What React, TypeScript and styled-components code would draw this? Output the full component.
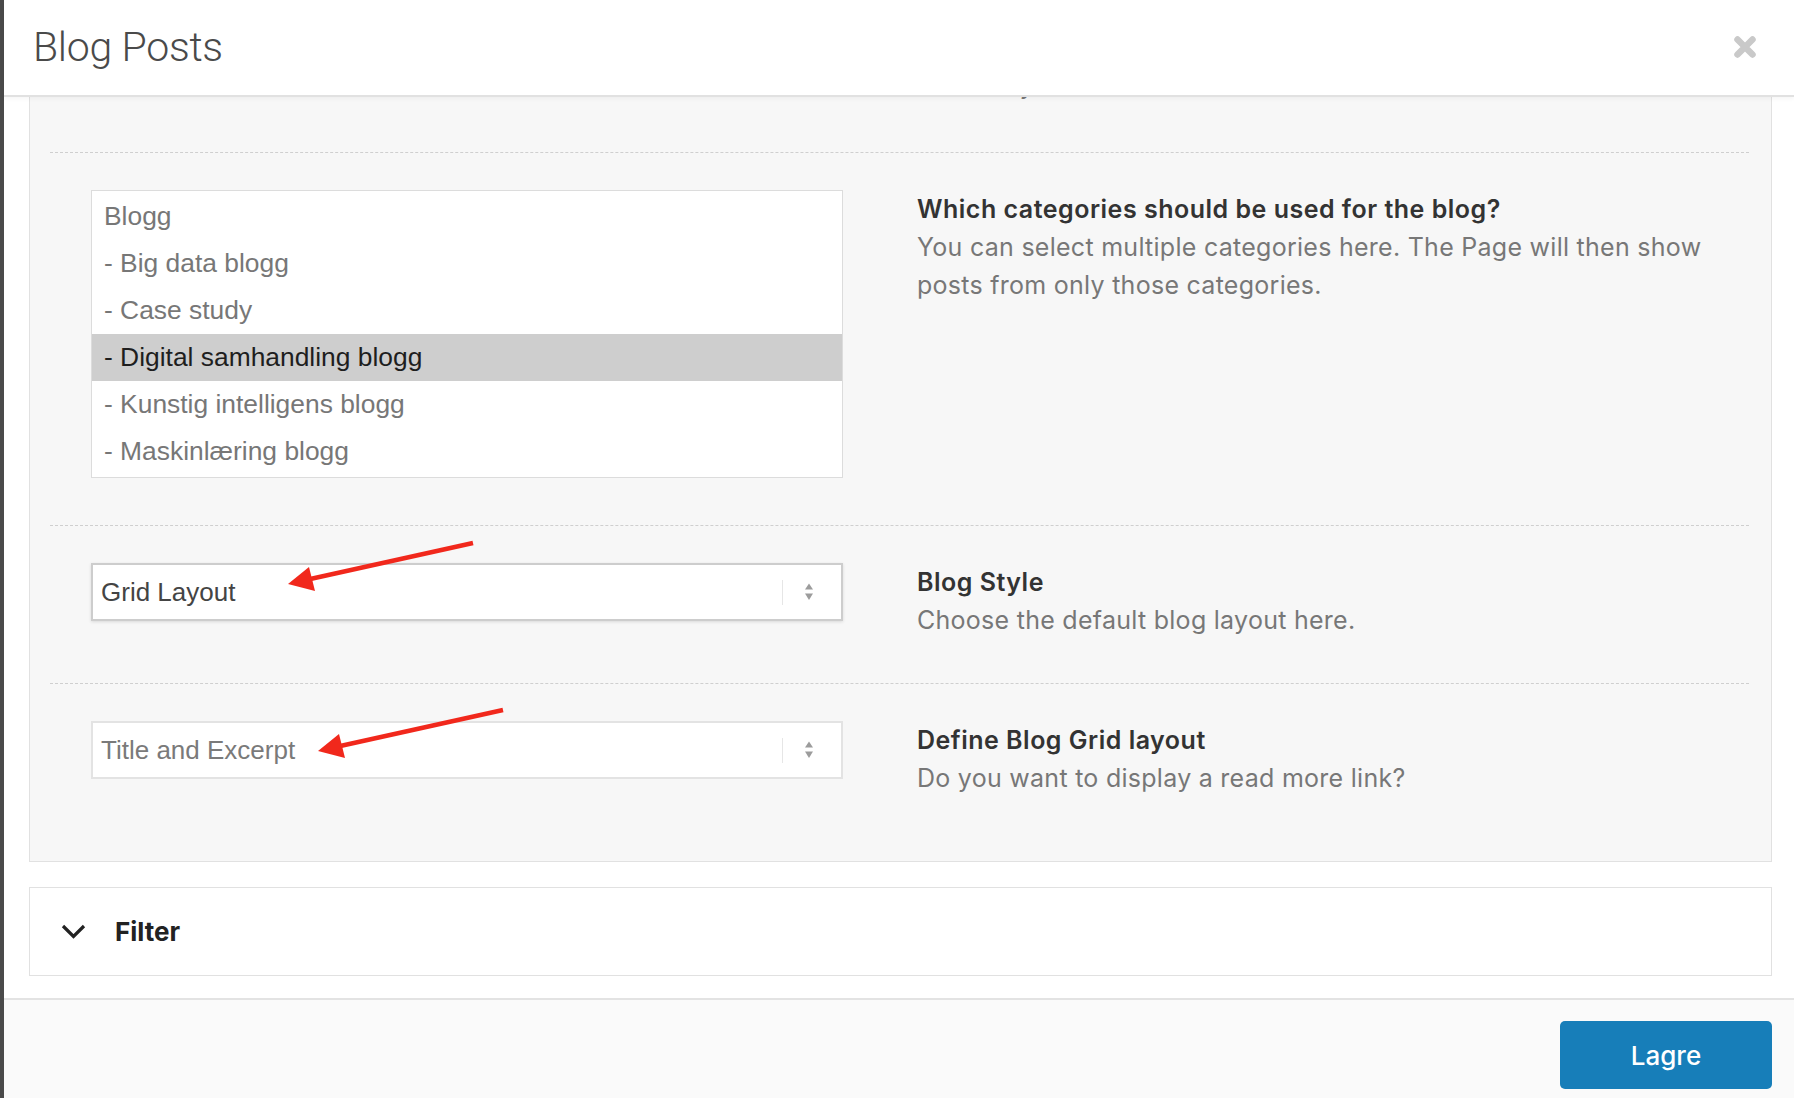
import { useLayoutEffect, useRef } from 'react';
import styled, { createGlobalStyle } from 'styled-components';

const GlobalStyle = createGlobalStyle`
  html, body {
    margin: 0;
    height: 100%;
    overflow: hidden;
    background: #4a4a4a;
  }
  #root {
    height: 100%;
  }
  * {
    box-sizing: border-box;
  }
`;

const categories = [
  'Blogg',
  '- Big data blogg',
  '- Case study',
  '- Digital samhandling blogg',
  '- Kunstig intelligens blogg',
  '- Maskinlæring blogg',
];

function SelectArrows() {
  return (
    <svg width='10' height='18' viewBox='0 0 10 18'>
      <path d='M1 6.5 L5 0.5 L9 6.5 Z' fill='#9c9c9c' />
      <path d='M1 10.5 L5 17 L9 10.5 Z' fill='#9c9c9c' />
    </svg>
  );
}

interface ArrowProps {
  x: number;
  y: number;
}

// red annotation arrow, tail at (x, y), pointing down-left to the label
function RedArrow({ x, y }: ArrowProps) {
  const tipX = x - 185;
  const tipY = y + 41;
  return (
    <StArrow>
      <line x1={x} y1={y} x2={tipX + 20} y2={tipY - 4.5} stroke='#f1281c' strokeWidth='4.5' />
      <polygon points={`${tipX},${tipY} ${tipX + 21},${tipY - 17} ${tipX + 27},${tipY + 7}`} fill='#f1281c' />
    </StArrow>
  );
}

function App() {
  const bodyRef = useRef<HTMLDivElement>(null);

  // the modal body is scrolled all the way down
  useLayoutEffect(() => {
    if (bodyRef.current) bodyRef.current.scrollTop = bodyRef.current.scrollHeight;
  }, []);

  return (
    <>
      <GlobalStyle />
      <StModal>
        <StHeader>
          <StTitle>Blog Posts</StTitle>
          <StClose aria-label='close'>
            <svg width='24' height='24' viewBox='0 0 24 24'>
              <path d='M4.5 4.5 L19.5 19.5 M19.5 4.5 L4.5 19.5' stroke='#c9c9c9' strokeWidth='6.5' strokeLinecap='round' />
            </svg>
          </StClose>
        </StHeader>

        <StBody ref={bodyRef}>
          <StPanel>
            <StRow $bottom={48}>
              <div />
              <StInfo>
                <StDesc>Sorted by date.</StDesc>
              </StInfo>
            </StRow>

            <StRow>
              <StList>
                {categories.map((c) => (
                  <StOption key={c} $selected={c === '- Digital samhandling blogg'}>{c}</StOption>
                ))}
              </StList>
              <StInfo>
                <StHeading>Which categories should be used for the blog?</StHeading>
                <StDesc>You can select multiple categories here. The Page will then show posts from only those categories.</StDesc>
              </StInfo>
            </StRow>

            <StRow>
              <StSelectWrap>
                <StSelect $raised>
                  <StSelectText>Grid Layout</StSelectText>
                  <StSelectSide>
                    <SelectArrows />
                  </StSelectSide>
                </StSelect>
                <RedArrow x={382} y={-20} />
              </StSelectWrap>
              <StInfo>
                <StHeading>Blog Style</StHeading>
                <StDesc>Choose the default blog layout here.</StDesc>
              </StInfo>
            </StRow>

            <StRow>
              <StSelectWrap>
                <StSelect>
                  <StSelectText $muted>Title and Excerpt</StSelectText>
                  <StSelectSide>
                    <SelectArrows />
                  </StSelectSide>
                </StSelect>
                <RedArrow x={412} y={-11} />
              </StSelectWrap>
              <StInfo>
                <StHeading>Define Blog Grid layout</StHeading>
                <StDesc>Do you want to display a read more link?</StDesc>
              </StInfo>
            </StRow>
          </StPanel>

          <StFilter>
            <svg width='25' height='15' viewBox='0 0 25 15'>
              <path d='M2 2 L12.5 12.5 L23 2' fill='none' stroke='#222' strokeWidth='3.2' />
            </svg>
            <StFilterLabel>Filter</StFilterLabel>
          </StFilter>
        </StBody>

        <StFooter>
          <StSaveButton type='button'>Lagre</StSaveButton>
        </StFooter>
      </StModal>
    </>
  );
}

export default App;

const StModal = styled.div`
  margin-left: 4px;
  height: 100%;
  background: #fff;
  display: flex;
  flex-direction: column;
`;

const StHeader = styled.header`
  flex: 0 0 97px;
  display: flex;
  align-items: center;
  justify-content: space-between;
  padding: 0 37px 2px 29px;
  border-bottom: 2px solid #e1e1e1;
  box-shadow: 0 2px 4px rgba(0, 0, 0, 0.04);
  position: relative;
  z-index: 1;
`;

const StTitle = styled.h1`
  margin: 0;
  font-family: Roboto, 'Liberation Sans', sans-serif;
  font-weight: 300;
  font-size: 41px;
  color: #4a4a4a;
  letter-spacing: -0.3px;
`;

const StClose = styled.button`
  border: none;
  background: transparent;
  padding: 0;
  width: 24px;
  height: 24px;
  display: flex;
  cursor: pointer;
`;

const StBody = styled.div`
  flex: 1;
  min-height: 0;
  overflow-y: auto;
  padding: 0 22px 22px 25px;
  scrollbar-width: none;
  &::-webkit-scrollbar {
    display: none;
  }
`;

const StPanel = styled.section`
  background: #f7f7f7;
  border: 1px solid #e1e1e1;
  padding: 0 22px 20px 20px;
`;

const StRow = styled.div<{ $bottom?: number }>`
  display: grid;
  grid-template-columns: 752px 1fr;
  column-gap: 74px;
  align-items: start;
  padding: 37px 0 ${(p) => p.$bottom ?? 44}px 41px;
  border-top: 1px dashed #cfcfcf;
  &:first-child {
    border-top-color: transparent;
  }
`;

const StList = styled.div`
  background: #fff;
  border: 1px solid #dcdcdc;
  padding: 2px 0;
  margin-bottom: 3px;
  font-family: 'Liberation Sans', Arial, sans-serif;
  font-size: 26.4px;
`;

const StOption = styled.div<{ $selected?: boolean }>`
  height: 47px;
  line-height: 47px;
  padding-left: 12px;
  color: ${(p) => (p.$selected ? '#1e1e1e' : '#777')};
  background: ${(p) => (p.$selected ? '#cecece' : 'transparent')};
  white-space: nowrap;
`;

const StSelectWrap = styled.div`
  position: relative;
`;

const StSelect = styled.div<{ $raised?: boolean }>`
  height: 58px;
  display: flex;
  align-items: center;
  background: #fff;
  border: ${(p) => (p.$raised ? '2px solid #cdcdcd' : '2px solid #e3e3e3')};
  box-shadow: ${(p) => (p.$raised ? '0 1px 3px rgba(0, 0, 0, 0.12)' : 'none')};
  padding-left: 8px;
`;

const StSelectText = styled.span<{ $muted?: boolean }>`
  flex: 1;
  font-family: 'Liberation Sans', Arial, sans-serif;
  font-size: 26px;
  color: ${(p) => (p.$muted ? '#7a7a7a' : '#444')};
`;

const StSelectSide = styled.div`
  width: 59px;
  height: 25px;
  border-left: 1px solid #e6e6e6;
  display: flex;
  align-items: center;
  padding-left: 21px;
`;

const StArrow = styled.svg`
  position: absolute;
  left: 0;
  top: 0;
  width: 100%;
  height: 100%;
  overflow: visible;
  pointer-events: none;
`;

const StInfo = styled.div`
  font-family: Inter, 'Noto Sans', sans-serif;
  font-size: 25px;
`;

const StHeading = styled.div`
  font-weight: 600;
  color: #333;
  padding-top: 2px;
  line-height: 34px;
  letter-spacing: 0.5px;
`;

const StDesc = styled.div`
  margin-top: 2px;
  color: #777;
  line-height: 38px;
  letter-spacing: 0.27px;
`;

const StFilter = styled.div`
  margin-top: 25px;
  height: 89px;
  display: flex;
  align-items: center;
  gap: 29px;
  padding-left: 31px;
  background: #fff;
  border: 1px solid #e1e1e1;
`;

const StFilterLabel = styled.span`
  font-family: Inter, 'Noto Sans', sans-serif;
  font-weight: 700;
  font-size: 26px;
  color: #222;
`;

const StFooter = styled.footer`
  flex: 0 0 100px;
  display: flex;
  justify-content: flex-end;
  align-items: flex-start;
  padding: 21px 22px 0 0;
  background: #fafafa;
  border-top: 2px solid #e3e3e3;
`;

const StSaveButton = styled.button`
  width: 212px;
  height: 68px;
  border: none;
  border-radius: 5px;
  background: #177eb9;
  color: #fff;
  font-family: Inter, 'Noto Sans', sans-serif;
  font-weight: 500;
  font-size: 26px;
  cursor: pointer;
`;
